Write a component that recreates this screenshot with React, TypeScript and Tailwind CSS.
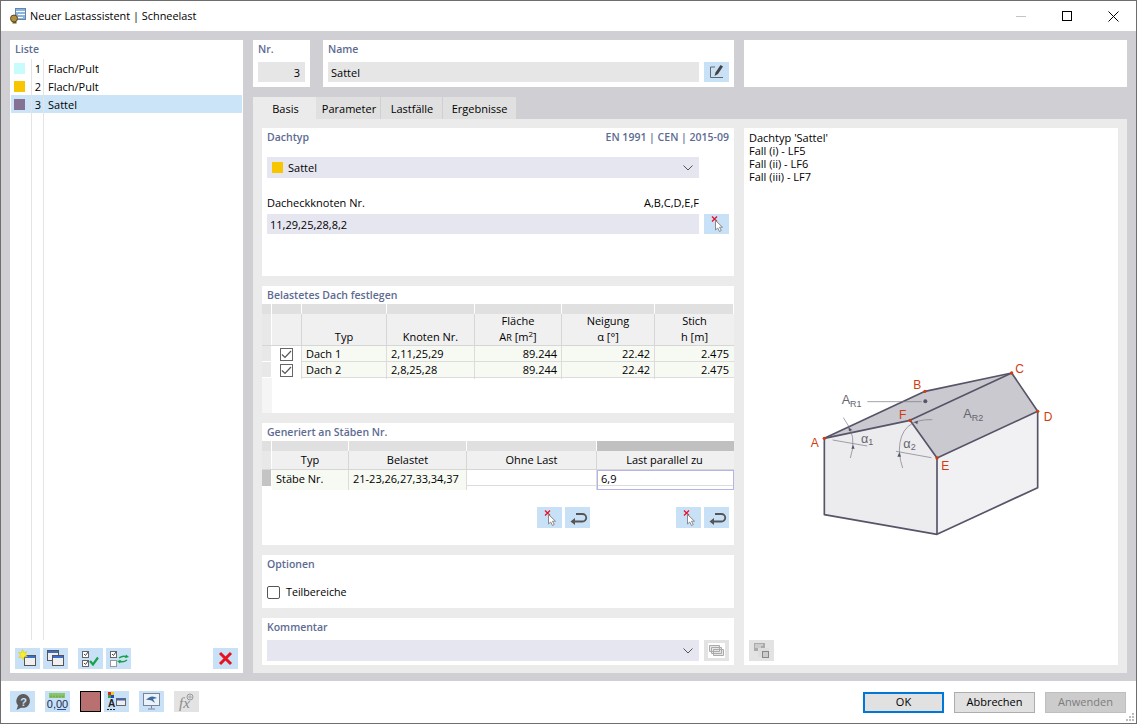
import React from 'react';

const font = { fontFamily: '"Open Sans", "Noto Sans", sans-serif' };

const PickIcon = () => (
  <svg width="25" height="20" viewBox="0 0 25 20">
    <path d="M8 2.500l5 5M13 2.500l-5 5" stroke="#e8112d" strokeWidth="1.300" />
    <path d="M11.500 6.500v9.500l2.200-2 1.800 3.500 1.800-1-1.800-3.300h3z" fill="#fff" stroke="#8a8a8a" strokeWidth="1" />
  </svg>
);

const UndoIcon = () => (
  <svg width="25" height="20" viewBox="0 0 25 20">
    <path d="M7 13.500h10.500a3.500 3.500 0 0 0 0-7.500H11" fill="none" stroke="#555" strokeWidth="1.800" />
    <path d="M10 10L5.500 13.500 10 17z" fill="#555" />
  </svg>
);

const EditIcon = () => (
  <svg width="25" height="20" viewBox="0 0 25 20">
    <path d="M11 5H6.500v10.500H19" fill="none" stroke="#666" strokeWidth="1" />
    <path d="M10.500 14l1-3.500L16.500 3l2.500 1.500-5 7.500z" fill="#444" />
  </svg>
);

const IconBtn = ({ children, gray }: { children: React.ReactNode; gray?: boolean }) => (
  <div className={`w-[25px] h-[21px] flex items-center justify-center shrink-0 ${gray ? 'bg-[#e3e3e3]' : 'bg-[#c9e1f6]'}`}>
    {children}
  </div>
);

const Heading = ({ children }: { children: React.ReactNode }) => (
  <div className="text-[10.5px] font-semibold text-[#5d6b92] leading-[14px]">{children}</div>
);

const Chevron = () => (
  <svg width="10" height="6" viewBox="0 0 10 6" className="shrink-0">
    <path d="M.5.500L5 5 9.500.500" fill="none" stroke="#555" strokeWidth="1" />
  </svg>
);

const WinBox = ({ x = 0, y = 0 }: { x?: number; y?: number }) => (
  <g transform={`translate(${x} ${y})`}>
    <rect x="0.500" y="0.500" width="11" height="10" fill="#f0f0f0" stroke="#555" />
    <rect x="1" y="1" width="10" height="2" fill="#3a6fd0" />
  </g>
);

const Check = () => (
  <div className="w-[13px] h-[13px] border border-[#666] bg-white flex items-center justify-center">
    <svg width="11" height="9" viewBox="0 0 11 9">
      <path d="M1 4.500L4 7.500 10 1" fill="none" stroke="#555" strokeWidth="1.200" />
    </svg>
  </div>
);

const listRows = [
  { nr: 1, name: 'Flach/Pult', color: 'bg-[#c8fcfc]', sel: false },
  { nr: 2, name: 'Flach/Pult', color: 'bg-[#f8c600]', sel: false },
  { nr: 3, name: 'Sattel', color: 'bg-[#847194]', sel: true },
];

const roofCols = 'grid grid-cols-[30px_85px_88px_87px_93px_79px]';
const roofRows = [
  { typ: 'Dach 1', kn: '2,11,25,29' },
  { typ: 'Dach 2', kn: '2,8,25,28' },
];

const barCols = 'grid grid-cols-[77px_118px_130px_137px]';

const House = () => (
  <svg width="270" height="200" viewBox="0 0 810 600" className="mt-[167px] ml-[41px] shrink-0" style={{ fontFamily: '"Liberation Sans", sans-serif' }}>
    <path d="M103 265L360 211 441 324V553L103 494z" fill="#ececef" />
    <path d="M441 324L743 184V413L441 553z" fill="#f1f1f3" />
    <path d="M103 265L405 124 665 69 360 211z" fill="#c9c9cf" />
    <path d="M360 211L665 69 743 184 441 324z" fill="#c9c9cf" />
    <g fill="none" stroke="#565468" strokeWidth="5" strokeLinejoin="round">
      <path d="M103 265L405 124 665 69 743 184V413L441 553 103 494z" />
      <path d="M103 265L360 211 441 324V553M441 324L743 184M360 211L665 69" />
    </g>
    <g fill="none" stroke="#77767f" strokeWidth="2">
      <path d="M128 270L232 288M318 304L424 323M232 155H395" />
      <path d="M160 203Q205 260 181 324M427 209Q330 205 328 300 330 335 338 354" />
    </g>
    <g fill="#565468">
      <circle cx="406" cy="154" r="6" />
      <path d="M175 232l12 8-10 4zM184 296h10l-5-12zM322 320h11l-5-13zM372 216l12-4-2 11z" />
    </g>
    <g fill="#d03c10">
      <circle cx="103" cy="265" r="5" /><circle cx="405" cy="124" r="5" />
      <circle cx="665" cy="69" r="5" /><circle cx="743" cy="184" r="5" />
      <circle cx="441" cy="324" r="5" /><circle cx="360" cy="211" r="5" />
    </g>
    <g fill="#d03c10" fontSize="36">
      <text x="62" y="290">A</text><text x="370" y="117">B</text>
      <text x="676" y="68">C</text><text x="761" y="212">D</text>
      <text x="454" y="361">E</text><text x="327" y="208">F</text>
    </g>
    <g fill="#66656e">
      <text x="155" y="163" fontSize="38">A<tspan fontSize="27" dy="8">R1</tspan></text>
      <text x="520" y="204" fontSize="38">A<tspan fontSize="27" dy="8">R2</tspan></text>
      <text x="213" y="278" fontSize="38">α<tspan fontSize="27" dy="6">1</tspan></text>
      <text x="340" y="294" fontSize="38">α<tspan fontSize="27" dy="6">2</tspan></text>
    </g>
  </svg>
);

export default function App() {
  return (
    <div style={font} className="w-[1137px] h-[724px] border border-[#6e6e6e] bg-white text-[11px] text-black flex flex-col overflow-hidden">
      <div className="h-[30px] shrink-0 flex items-center pl-[8px]">
        <svg width="18" height="18" viewBox="0 0 18 18">
          <rect x="6.500" y="1.500" width="10" height="11" fill="#8eb4dc" stroke="#5f86b0" />
          <path d="M7 4.500h9M9 7.500h7M9 10.500h5" stroke="#fff" strokeWidth="1.200" />
          <circle cx="5" cy="11.500" r="3.500" fill="#b09040" stroke="#5c4a1c" />
          <path d="M3.500 15h4v1.500h-4z" fill="#6b5520" />
        </svg>
        <span className="ml-[3px] text-[10.9px]">Neuer Lastassistent | Schneelast</span>
        <div className="ml-auto flex items-center">
          <div className="w-[46px] flex justify-center"><div className="w-[10px] h-px bg-[#c4c4c4]" /></div>
          <div className="w-[46px] flex justify-center"><div className="w-[10px] h-[10px] border border-black" /></div>
          <div className="w-[46px] flex justify-center">
            <svg width="11" height="11" viewBox="0 0 11 11"><path d="M.5.500l10 10M10.500.500l-10 10" stroke="#000" strokeWidth="1" /></svg>
          </div>
        </div>
      </div>

      <div className="h-[650px] shrink-0 bg-[#d0d0d4] pl-[9px] pt-[9px] flex gap-[10px]">
        <div className="w-[233px] h-[633px] bg-white flex flex-col px-px">
          <div className="h-[19px] pl-[4px] pt-[2px] shrink-0"><Heading>Liste</Heading></div>
          {listRows.map((r) => (
            <div key={r.nr} className={`h-[18px] flex items-center shrink-0 ${r.sel ? 'bg-[#cce4f7]' : ''}`}>
              <div className="w-[21px] h-full flex items-center pl-[3px] border-r border-[#e4e4e4]">
                <div className={`w-[11px] h-[11px] ${r.color}`} />
              </div>
              <div className="w-[12px] h-full flex items-center justify-end pr-[2px] pt-[2px] border-r border-[#e4e4e4]">{r.nr}</div>
              <div className="pl-[4px] pt-[2px]">{r.name}</div>
            </div>
          ))}
          <div className="flex-1 flex">
            <div className="w-[21px] border-r border-[#e4e4e4]" />
            <div className="w-[12px] border-r border-[#e4e4e4]" />
          </div>
          <div className="h-[33px] shrink-0 pt-[8px] pl-[4px] flex items-start">
            <IconBtn>
              <svg width="25" height="21" viewBox="0 0 25 21">
                <WinBox x={9} y={7} />
                <path d="M7.500 1.500l1.300 3 3-.800-1.500 2.800 2 2-3 .300-1 3-1.500-2.800-3 .500 1.700-2.700-2-2.300 3 .300z" fill="#f7ee30" stroke="#d8c400" strokeWidth=".5" />
              </svg>
            </IconBtn>
            <div className="ml-[3px]">
              <IconBtn>
                <svg width="25" height="21" viewBox="0 0 25 21"><WinBox x={4} y={2} /><WinBox x={9} y={7} /></svg>
              </IconBtn>
            </div>
            <div className="ml-[10px]">
              <IconBtn>
                <svg width="25" height="21" viewBox="0 0 25 21">
                  <rect x="4.500" y="3.500" width="6" height="6" fill="#fff" stroke="#666" />
                  <rect x="4.500" y="12.500" width="6" height="6" fill="#fff" stroke="#666" />
                  <path d="M6 6l1.500 1.500L10 4M6 15l1.500 1.500L10 13" fill="none" stroke="#444" />
                  <path d="M12 13l3 3.500 5-7" fill="none" stroke="#17a34a" strokeWidth="2.200" />
                </svg>
              </IconBtn>
            </div>
            <div className="ml-[3px]">
              <IconBtn>
                <svg width="25" height="21" viewBox="0 0 25 21">
                  <rect x="4.500" y="3.500" width="6" height="6" fill="#fff" stroke="#666" />
                  <rect x="4.500" y="12.500" width="6" height="6" fill="#fff" stroke="#999" />
                  <path d="M6 6l1.500 1.500L10 4" fill="none" stroke="#444" />
                  <path d="M13 10q4-3 8-1M21 12q-4 3-8 1" fill="none" stroke="#17a34a" strokeWidth="1.500" />
                  <path d="M20 6.500l3 2.500-4 1zM14 15.500l-3-2.500 4-1z" fill="#17a34a" />
                </svg>
              </IconBtn>
            </div>
            <div className="ml-[82px]">
              <IconBtn>
                <svg width="25" height="21" viewBox="0 0 25 21">
                  <path d="M7 5l11 11M18 5L7 16" stroke="#e8121f" strokeWidth="3" />
                </svg>
              </IconBtn>
            </div>
          </div>
        </div>

        <div className="w-[874px] flex flex-col">
          <div className="h-[47px] flex shrink-0">
            <div className="w-[57px] bg-white px-[5px] pt-[2px]">
              <Heading>Nr.</Heading>
              <div className="mt-[6px] h-[20px] bg-[#e6e6e6] flex items-center justify-end pr-[5px] pt-[2px]">3</div>
            </div>
            <div className="ml-[13px] w-[411px] bg-white px-[5px] pt-[2px]">
              <Heading>Name</Heading>
              <div className="mt-[6px] flex">
                <div className="w-[371px] h-[20px] bg-[#e6e6e6] flex items-center pl-[3px] pt-[2px]">Sattel</div>
                <div className="ml-[5px]"><div className="w-[25px] h-[20px] bg-[#c9e1f6]"><EditIcon /></div></div>
              </div>
            </div>
            <div className="ml-[10px] w-[383px] bg-white" />
          </div>

          <div className="mt-[10px] h-[22px] flex shrink-0">
            <div className="w-[63px] bg-[#ebebeb] flex items-center justify-center pt-[3px] pl-[2px]">Basis</div>
            <div className="w-[65px] bg-[#e0e0e0] flex items-center justify-center pt-[3px] pl-[2px] border-r border-[#d0d0d4]">Parameter</div>
            <div className="w-[62px] bg-[#e0e0e0] flex items-center justify-center pt-[3px] pl-[1px] border-r border-[#d0d0d4]">Lastfälle</div>
            <div className="w-[73px] bg-[#e0e0e0] flex items-center justify-center pt-[3px]">Ergebnisse</div>
          </div>

          <div className="h-[554px] bg-[#ebebeb] px-[9px] pt-[9px] flex gap-[10px]">
            <div className="w-[472px] flex flex-col gap-[10px]">
              <div className="h-[148px] bg-white px-[5px] pt-[2px]">
                <div className="flex justify-between">
                  <Heading>Dachtyp</Heading>
                  <Heading>EN 1991 | CEN | 2015-09</Heading>
                </div>
                <div className="mt-[13px] w-[432px] h-[21px] bg-[#e6e6f0] flex items-center px-[5px]">
                  <div className="w-[11px] h-[11px] bg-[#f8c600]" />
                  <span className="ml-[5px] pt-[2px]">Sattel</span>
                  <div className="ml-auto mr-[1px] flex"><Chevron /></div>
                </div>
                <div className="mt-[18px] w-[432px] h-[15px] flex items-center justify-between">
                  <span>Dacheckknoten Nr.</span><span>A,B,C,D,E,F</span>
                </div>
                <div className="mt-[3px] flex">
                  <div className="w-[432px] h-[20px] bg-[#e6e6f0] flex items-center pl-[3px] pt-[2px]">11,29,25,28,8,2</div>
                  <div className="ml-[5px] w-[25px] h-[20px] bg-[#c9e1f6]"><PickIcon /></div>
                </div>
              </div>

              <div className="h-[127px] bg-white flex flex-col">
                <div className="h-[18px] pl-[5px] pt-[2px] shrink-0"><Heading>Belastetes Dach festlegen</Heading></div>
                <div className="flex h-[10px] shrink-0">
                  <div className="w-[10px] bg-[#e0e0e0] border-r border-white" />
                  <div className={`${roofCols} flex-1`}>
                    {[0, 1, 2, 3, 4, 5].map((i) => <div key={i} className="bg-[#e0e0e0] border-r border-white" />)}
                  </div>
                </div>
                <div className="flex h-[32px] shrink-0 border-b border-[#d6d6d6]">
                  <div className="w-[10px] bg-[#e8e8e8] border-r border-white" />
                  <div className={`${roofCols} flex-1 bg-[#f0f0f0] text-center leading-[16px]`}>
                    <div className="border-r border-[#d6d6d6]" />
                    <div className="border-r border-[#d6d6d6] flex items-end justify-center pb-px">Typ</div>
                    <div className="border-r border-[#d6d6d6] flex items-end justify-center pb-px">Knoten Nr.</div>
                    <div className="border-r border-[#d6d6d6]">
                      <div className="-mt-px">Fläche</div>
                      <div>A<span className="text-[9px]">R</span> [m<sup className="text-[8px] leading-none">2</sup>]</div>
                    </div>
                    <div className="border-r border-[#d6d6d6]"><div className="-mt-px">Neigung</div><div>α [°]</div></div>
                    <div><div className="-mt-px">Stich</div><div>h [m]</div></div>
                  </div>
                </div>
                {roofRows.map((r) => (
                  <div key={r.typ} className="flex h-[16px] shrink-0">
                    <div className="w-[10px] bg-[#e8e8e8] border-r border-b border-white" />
                    <div className={`${roofCols} flex-1 bg-[#f7f9f3] border-b border-[#dcdcdc]`}>
                      <div className="bg-white border-r border-[#dcdcdc] flex items-center justify-center"><Check /></div>
                      <div className="border-r border-[#dcdcdc] flex items-center pl-[4px]">{r.typ}</div>
                      <div className="border-r border-[#dcdcdc] flex items-center pl-[4px]">{r.kn}</div>
                      <div className="border-r border-[#dcdcdc] flex items-center justify-end pr-[4px]">89.244</div>
                      <div className="border-r border-[#dcdcdc] flex items-center justify-end pr-[4px]">22.42</div>
                      <div className="flex items-center justify-end pr-[5px]">2.475</div>
                    </div>
                  </div>
                ))}
                <div className="flex-1 flex">
                  <div className="w-[10px] bg-[#f5f5f5]" />
                </div>
              </div>

              <div className="h-[122px] bg-white flex flex-col">
                <div className="h-[18px] pl-[5px] pt-[2px] shrink-0"><Heading>Generiert an Stäben Nr.</Heading></div>
                <div className="flex h-[10px] shrink-0">
                  <div className="w-[10px] bg-[#e0e0e0] border-r border-white" />
                  <div className={`${barCols} flex-1`}>
                    <div className="bg-[#e0e0e0] border-r border-white" />
                    <div className="bg-[#e0e0e0] border-r border-white" />
                    <div className="bg-[#e0e0e0] border-r border-white" />
                    <div className="bg-[#c0c0c0]" />
                  </div>
                </div>
                <div className="flex h-[19px] shrink-0 border-b border-[#d6d6d6]">
                  <div className="w-[10px] bg-[#e8e8e8] border-r border-white" />
                  <div className={`${barCols} flex-1 bg-[#f0f0f0] text-center`}>
                    <div className="border-r border-[#d6d6d6] flex items-center justify-center">Typ</div>
                    <div className="border-r border-[#d6d6d6] flex items-center justify-center">Belastet</div>
                    <div className="border-r border-[#d6d6d6] flex items-center justify-center">Ohne Last</div>
                    <div className="flex items-center justify-center pr-[2px]">Last parallel zu</div>
                  </div>
                </div>
                <div className="flex h-[16px] shrink-0">
                  <div className="w-[10px] bg-[#c4c4c4] border-r border-white" />
                  <div className={`${barCols} flex-1 border-b border-[#dcdcdc]`}>
                    <div className="bg-[#f7f9f3] border-r border-[#dcdcdc] flex items-center pl-[4px] pb-px">Stäbe Nr.</div>
                    <div className="bg-[#f7f9f3] border-r border-[#dcdcdc] flex items-center pl-[4px] pb-px">21-23,26,27,33,34,37</div>
                    <div className="border-r border-[#dcdcdc]" />
                    <div className="border border-[#b4b4e6] flex items-center pl-[3px] pb-px">6,9</div>
                  </div>
                </div>
                <div className="mt-[21px] flex pl-[275px]">
                  <IconBtn><PickIcon /></IconBtn>
                  <div className="ml-[3px]"><IconBtn><UndoIcon /></IconBtn></div>
                  <div className="ml-[86px]"><IconBtn><PickIcon /></IconBtn></div>
                  <div className="ml-[3px]"><IconBtn><UndoIcon /></IconBtn></div>
                </div>
              </div>

              <div className="h-[53px] bg-white px-[5px] pt-[2px]">
                <Heading>Optionen</Heading>
                <div className="mt-[13px] flex items-center">
                  <div className="w-[13px] h-[13px] rounded-[2px] border border-[#555]" />
                  <span className="ml-[6px] text-[10.7px]">Teilbereiche</span>
                </div>
              </div>

              <div className="h-[47px] bg-white px-[5px] pt-[2px]">
                <Heading>Kommentar</Heading>
                <div className="mt-[6px] flex">
                  <div className="w-[432px] h-[21px] bg-[#e6e6f0] flex items-center justify-end pr-[6px]"><Chevron /></div>
                  <div className="ml-[5px]">
                    <IconBtn gray>
                      <svg width="25" height="21" viewBox="0 0 25 21">
                        <rect x="4" y="3" width="17" height="15" fill="#fff" />
                        <path d="M5.500 5.500h10v6h-10zM7.500 7.500h10v6h-10zM9.500 9.500h10v6h-10z" fill="#e6e6e6" stroke="#aaa" />
                      </svg>
                    </IconBtn>
                  </div>
                </div>
              </div>
            </div>

            <div className="w-[374px] h-[537px] bg-white px-[5px] pt-[3px] flex flex-col leading-[13px]">
              <div>Dachtyp 'Sattel'</div>
              <div>Fall (i) - LF5</div>
              <div>Fall (ii) - LF6</div>
              <div>Fall (iii) - LF7</div>
              <House />
              <div className="mt-[90px]">
                <IconBtn gray>
                  <svg width="25" height="21" viewBox="0 0 25 21">
                    <rect x="5" y="3" width="11" height="8" fill="#aaa" />
                    <rect x="9" y="8" width="11" height="9" fill="#ddd" />
                    <rect x="13.500" y="11.500" width="6" height="6" fill="#ccc" stroke="#888" />
                    <path d="M6 5h8M6 7h6" stroke="#eee" />
                  </svg>
                </IconBtn>
              </div>
            </div>
          </div>
        </div>
      </div>

      <div className="flex-1 flex items-start pt-[10px] pl-[9px] relative">
        <IconBtn>
          <svg width="25" height="21" viewBox="0 0 25 21">
            <path d="M13.500 3a7 7 0 0 1 1 13.800H11L6.500 19 8 14.500A7 7 0 0 1 13.500 3z" fill="#5c5c5c" />
            <text x="13.500" y="14.500" fontSize="11" fontWeight="700" fill="#c9e1f6" textAnchor="middle" fontFamily="Liberation Sans">?</text>
          </svg>
        </IconBtn>
        <div className="ml-[10px]">
          <IconBtn>
            <svg width="25" height="21" viewBox="0 0 25 21">
              <rect x="4" y="2" width="16" height="5" fill="#8cc46a" />
              <path d="M6 4.500v2M9 4.500v2M12 4.500v2M15 4.500v2M18 4.500v2" stroke="#5f9a40" />
              <text x="12.500" y="17" fontSize="11" fill="#1c2a50" textAnchor="middle" fontFamily="Liberation Sans">0,00</text>
              <path d="M12 18.500h9" stroke="#2b4da0" />
            </svg>
          </IconBtn>
        </div>
        <div className="ml-[10px] w-[21px] h-[21px] bg-[#b87070] border border-black" />
        <div className="ml-[3px]">
          <IconBtn>
            <svg width="25" height="21" viewBox="0 0 25 21">
              <rect x="4" y="1" width="3" height="3" fill="#d22" /><rect x="7" y="1" width="3" height="3" fill="#ec2" />
              <rect x="4" y="4" width="3" height="3" fill="#2a4" /><rect x="7" y="4" width="3" height="3" fill="#24c" />
              <text x="7.500" y="16" fontSize="10" fontWeight="700" fill="#222" textAnchor="middle" fontFamily="Liberation Sans">A</text>
              <path d="M3 18.500h9" stroke="#222" strokeDasharray="2 1" />
              <rect x="12.500" y="7.500" width="9" height="7" fill="#eee" stroke="#666" />
              <rect x="13" y="8" width="8" height="1.500" fill="#36c" />
            </svg>
          </IconBtn>
        </div>
        <div className="ml-[10px]">
          <IconBtn>
            <svg width="25" height="21" viewBox="0 0 25 21">
              <rect x="4.500" y="2.500" width="16" height="12" fill="#eaf2fa" stroke="#7a8494" />
              <path d="M7 9q5-6 11-2l-4 1 2 4q-4-4-9-3z" fill="#3e6a9c" />
              <path d="M12.500 14.500v3M9 18h7" stroke="#7a8494" />
            </svg>
          </IconBtn>
        </div>
        <div className="ml-[10px]">
          <IconBtn gray>
            <svg width="25" height="21" viewBox="0 0 25 21">
              <text x="5" y="17" fontSize="15" fontStyle="italic" fill="#8a8a8a" fontFamily="Liberation Serif">fx</text>
              <circle cx="16" cy="6" r="3" fill="none" stroke="#999" />
              <path d="M14 6h4M16 4v4" stroke="#999" strokeWidth=".7" />
            </svg>
          </IconBtn>
        </div>

        <div className="ml-auto mr-[10px] mt-px flex gap-[10px]">
          <div className="w-[81px] h-[21px] bg-[#e1e1e1] border-2 border-[#0078d7] flex items-center justify-center">OK</div>
          <div className="w-[81px] h-[21px] bg-[#e1e1e1] border border-[#adadad] flex items-center justify-center">Abbrechen</div>
          <div className="w-[81px] h-[21px] bg-[#cccccc] border border-[#bfbfbf] text-[#7c7c7c] flex items-center justify-center">Anwenden</div>
        </div>
        <svg width="10" height="10" viewBox="0 0 10 10" className="absolute right-[1px] bottom-[1px]">
          <path d="M7 1h2v2H7zM4 4h2v2H4zM7 4h2v2H7zM1 7h2v2H1zM4 7h2v2H4zM7 7h2v2H7z" fill="#bcbcbc" />
        </svg>
      </div>
    </div>
  );
}
